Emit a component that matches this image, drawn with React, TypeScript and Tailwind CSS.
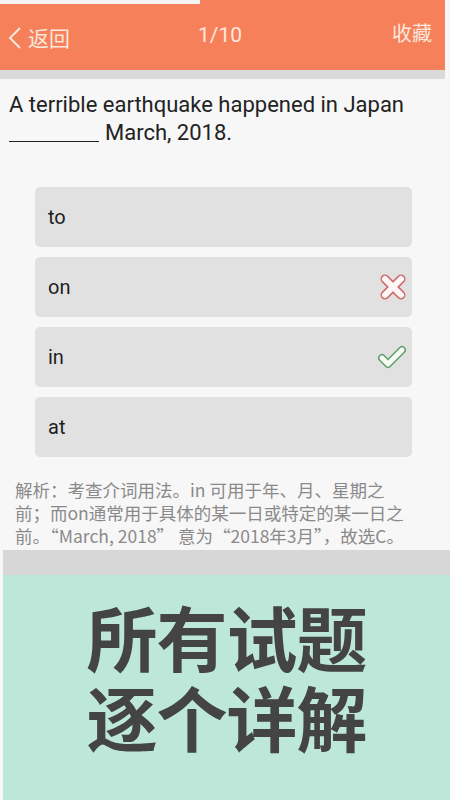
import React from "react";

const latin = { fontFamily: 'Roboto, "Noto Sans CJK SC", sans-serif' };
const cjk = { fontFamily: '"Noto Sans CJK SC", Roboto, sans-serif' };

function Cross() {
  return (
    <svg width="28" height="28" viewBox="0 0 28 28">
      <g strokeLinecap="round">
        <line x1="6" y1="6" x2="22" y2="22" stroke="#d26a6a" strokeWidth="9" />
        <line x1="22" y1="6" x2="6" y2="22" stroke="#d26a6a" strokeWidth="9" />
        <line x1="6" y1="6" x2="22" y2="22" stroke="#fdf7f7" strokeWidth="6" />
        <line x1="22" y1="6" x2="6" y2="22" stroke="#fdf7f7" strokeWidth="6" />
      </g>
    </svg>
  );
}

function Check() {
  return (
    <svg width="30" height="26" viewBox="0 0 30 26">
      <g strokeLinecap="round" strokeLinejoin="round" fill="none">
        <polyline points="5,14 11,20 25,6" stroke="#5f9e67" strokeWidth="8" />
        <polyline points="5,14 11,20 25,6" stroke="#f6fbf6" strokeWidth="5" />
      </g>
    </svg>
  );
}

function Option({ label, icon }: { label: string; icon?: React.ReactNode }) {
  return (
    <div className="h-[60px] bg-[#e1e1e1] rounded-[5px] flex items-center justify-between pl-[13px] pr-[5px]">
      <span className="text-[20px] text-[#1e1e1e]" style={latin}>
        {label}
      </span>
      {icon}
    </div>
  );
}

export default function App() {
  return (
    <div className="w-[450px] h-[800px] bg-[#f7f7f7] flex flex-col overflow-hidden" style={latin}>
      <div className="relative h-[70px] w-[445px] bg-[#f6805a] grid grid-cols-3 items-center pl-[8px] pr-[13px] pt-[6px]">
        <div className="absolute left-0 top-0 w-[200px] h-[4px] bg-[#f4f4f4]" />
        <div className="flex items-center gap-[6px] text-[#fbe8dc]">
          <svg width="14" height="24" viewBox="0 0 14 24">
            <path d="M12 2 L2 12 L12 22" fill="none" stroke="#fbe8dc" strokeWidth="2" />
          </svg>
          <span className="text-[21px]" style={cjk}>返回</span>
        </div>
        <span className="text-[21px] text-[#fbe8dc] text-center -mt-[4px]" style={latin}>1/10</span>
        <span className="text-[20px] text-[#fbe8dc] text-right -mt-[10px]" style={cjk}>收藏</span>
      </div>
      <div className="h-[9px] w-[445px] bg-[#dadada]" />
      <div className="px-[9px] pt-[12px] text-[22px] leading-[28px] text-[#222]" style={latin}>
        <div>A terrible earthquake happened in Japan</div>
        <div className="flex items-end gap-[6px]">
          <span className="inline-block w-[90px] border-b-[1.5px] border-[#222] mb-[5px]" />
          <span>March, 2018.</span>
        </div>
      </div>
      <div className="flex flex-col gap-[10px] pl-[35px] pr-[38px] mt-[40px]">
        <Option label="to" />
        <Option label="on" icon={<Cross />} />
        <Option label="in" icon={<Check />} />
        <Option label="at" />
      </div>
      <div className="px-[15px] mt-[21px] text-[17.5px] leading-[23px] text-[#8a8a8a]" style={cjk}>
        <div>解析：考查介词用法。in 可用于年、月、星期之</div>
        <div>前；而on通常用于具体的某一日或特定的某一日之</div>
        <div>前。“March, 2018” 意为“2018年3月”，故选C。</div>
      </div>
      <div className="mt-[3px] h-[25px] bg-[#d7d7d7] ml-[3px]" />
      <div className="flex-1 bg-[#bde8d9] ml-[3px] flex flex-col items-center pt-[20px]">
        <div className="text-[71px] leading-[80px] font-bold text-[#444] tracking-[-1px]" style={cjk}>
          所有试题
        </div>
        <div className="text-[71px] leading-[80px] font-bold text-[#444] tracking-[-1px]" style={cjk}>
          逐个详解
        </div>
      </div>
    </div>
  );
}
